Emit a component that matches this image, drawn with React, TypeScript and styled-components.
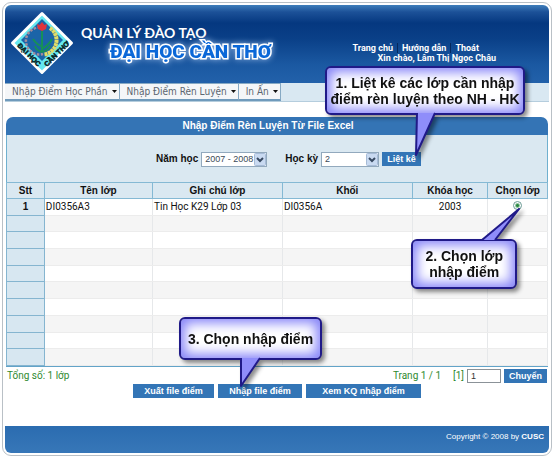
import React from "react";
import styled, { createGlobalStyle } from "styled-components";

const sans = '"Liberation Sans", Arial, sans-serif';
const compact = 'Roboto, "Liberation Sans", sans-serif';
const ui = '"DejaVu Sans Condensed", "DejaVu Sans", sans-serif';

const GlobalStyle = createGlobalStyle`
  *, *::before, *::after { box-sizing: border-box; }
  body { margin: 0; background: #fff; font-family: ${compact}; font-size: 10px; color: #111; }
`;

const Frame = styled.div`
  display: flex;
  flex-direction: column;
  margin: 2px 2px 0;
  padding: 2px;
  border: 1px solid #b9c0c6;
  border-radius: 9px;
  background: #fff;
`;

const Header = styled.header`
  display: flex;
  align-items: flex-start;
  justify-content: space-between;
  height: 78px;
  padding: 6px 53px 0 5px;
  border-radius: 6px 6px 0 0;
  background: linear-gradient(#3f7ebb 0, #1c5198 7px, #053880 18px, #0a4088 34px, #1b59a2 60px, #2261aa 100%);
  color: #fff;
`;

const Brand = styled.div`
  display: flex;
  align-items: flex-start;
  gap: 7px;
`;

const BrandText = styled.div`
  padding-top: 13px;
`;

const BrandLine = styled.div`
  font: 700 14px/18px Lato, sans-serif;
  white-space: nowrap;
`;

const BrandName = styled.h1`
  margin: 0;
  padding-left: 29px;
  font: 900 19px/20px Roboto, sans-serif;
  white-space: nowrap;
  color: #0b68d8;
  -webkit-text-stroke: 3px #fff;
  paint-order: stroke fill;
  filter: drop-shadow(0 0 3px #8fb4e4);
`;

const UserArea = styled.div`
  padding-top: 32px;
  font: 700 9px/10px ${compact};
  white-space: nowrap;
`;

const UserLinks = styled.nav`
  display: flex;
  a {
    color: #fff;
    text-decoration: none;
  }
  a + a {
    margin-left: 4px;
    padding-left: 4px;
    border-left: 1px solid #06285c;
  }
`;

const Greeting = styled.div`
  padding-left: 25px;
`;

const MenuBar = styled.nav`
  display: flex;
  height: 19px;
  background: #d9e8f2;
  border-bottom: 1px solid #b5cddd;
`;

const MenuItem = styled.button`
  display: flex;
  align-items: center;
  gap: 4px;
  padding: 0 2px 0 7px;
  border: 1px solid #86a9c4;
  border-left-width: 0;
  border-bottom: 2px solid #6f9abb;
  background: #f4f6f8;
  color: #5c6670;
  font: 10px/14px ${ui};
  white-space: nowrap;
`;

const Main = styled.main`
  padding: 15px 1px 0;
`;

const Panel = styled.section`
  border-bottom: 1px solid #62a3c8;
`;

const PanelTitle = styled.h2`
  margin: 0;
  height: 18px;
  border-radius: 7px 7px 0 0;
  background: #3474b5;
  color: #fff;
  font: 700 10px/18px ${sans};
  text-align: center;
  padding-right: 18px;
`;

const Filters = styled.form`
  display: flex;
  align-items: center;
  justify-content: center;
  height: 47px;
  padding: 1px 0 0 23px;
  border: solid #6fb0cf;
  border-width: 0 1px;
  background: #dae8f1;
`;

const Label = styled.label`
  font: 700 10px/14px ${sans};
  margin-right: 3px;
  white-space: nowrap;
`;

const SelectBox = styled.span<{ $width: number; $after: number }>`
  position: relative;
  display: inline-flex;
  width: ${(p) => p.$width}px;
  margin-right: ${(p) => p.$after}px;
  svg {
    position: absolute;
    top: 1px;
    right: 1px;
    pointer-events: none;
  }
`;

const Select = styled.select`
  appearance: none;
  width: 100%;
  height: 15px;
  padding: 0 0 0 3px;
  border: 1px solid #92a9bd;
  border-radius: 0;
  background: #fff;
  color: #3c4a58;
  font: 9px/13px ${sans};
`;

const Anchor = styled.span`
  position: relative;
  display: inline-flex;
`;

const Button = styled.button<{ $width: number }>`
  width: ${(p) => p.$width}px;
  height: 14px;
  padding: 0;
  border: 0;
  background: #3375b6;
  color: #fff;
  font: 700 9px/14px ${sans};
  white-space: nowrap;
`;

const Table = styled.table`
  width: 100%;
  height: 184px;
  table-layout: fixed;
  border-collapse: collapse;
  border: 1px solid #62a3c8;
  th, td { padding: 0 1px; height: 16px; line-height: 13px; }
  thead th {
    background: #dae8f1;
    border: 1px solid #85b9d4;
    font: 700 10px/13px ${sans};
  }
  tbody th {
    background: #d7e7f1;
    border: 1px solid #85b5d0;
    font: 700 10px/13px ${sans};
  }
  tbody td {
    border: 1px solid #e6e8ea;
    border-bottom-color: #ececec;
    white-space: nowrap;
  }
  tbody tr:nth-child(even) td { background: #f5f5f5; }
`;

const Col = styled.col<{ $share: number }>`
  width: ${(p) => p.$share}%;
`;

const Cell = styled.td<{ $center?: boolean }>`
  text-align: ${(p) => (p.$center ? "center" : "left")};
`;

const Radio = styled.input`
  appearance: none;
  width: 9px;
  height: 9px;
  margin: 0;
  border: 1px solid #6a9a94;
  border-radius: 50%;
  background: radial-gradient(#2c8a43 0 1px, #fff 3px);
`;

const Status = styled.div`
  display: flex;
  align-items: center;
  justify-content: space-between;
  height: 17px;
  padding: 0 1px;
  color: #2f8a2f;
`;

const Pager = styled.div`
  display: flex;
  align-items: center;
`;

const PageCount = styled.span`
  margin-right: 12px;
`;

const PageInput = styled.input`
  width: 34px;
  height: 14px;
  margin: 0 3px;
  padding: 0 3px;
  border: 1px solid #8b9298;
  background: #fff;
  color: #333;
  font: 9px/12px ${sans};
`;

const Actions = styled.div`
  display: flex;
  justify-content: center;
  gap: 4px;
  height: 42px;
`;

const Footer = styled.footer`
  height: 27px;
  padding: 5px 5px 0 0;
  border-radius: 0 0 6px 6px;
  background: linear-gradient(#2b6cb0, #3777b8);
  color: #fff;
  font: 8px/12px ${sans};
  text-align: right;
`;

const Bubble = styled.div<{ $x: number; $y: number; $w: number; $h: number }>`
  position: absolute;
  z-index: 5;
  left: ${(p) => p.$x}px;
  top: ${(p) => p.$y}px;
  width: ${(p) => p.$w}px;
  height: ${(p) => p.$h}px;
  display: flex;
  align-items: center;
  justify-content: center;
  border: 2px solid #201a88;
  border-radius: 6px;
  background: #fff;
  box-shadow: inset 0 0 12px 4px #8583f8;
  filter: drop-shadow(3px 3px 2px rgba(0, 0, 0, 0.45));
  color: #111;
  font: 700 14px/16px ${sans};
  text-align: center;
  white-space: pre;
  pointer-events: none;
`;

const Pointer = styled.svg<{ $x: number; $y: number }>`
  position: absolute;
  left: ${(p) => p.$x}px;
  top: ${(p) => p.$y}px;
  overflow: visible;
`;

function Logo() {
  return (
    <svg width="64" height="64" viewBox="0 0 64 64" role="img" aria-label="Đại Học Cần Thơ">
      <defs>
        <path id="leftEdge" d="M7 35 L30 58" />
        <path id="rightEdge" d="M37 56 L62 31" />
      </defs>
      <path d="M32 2.500 L61.500 32 L32 61.500 L2.500 32Z" fill="#66e8f0" stroke="#fff" strokeWidth="3" strokeLinejoin="round" />
      <path d="M32 8 L53 29 L32 50 L11 29Z" fill="#1b64a8" />
      <path d="M30 16.500 A13.500 13.500 0 1 0 33 43" fill="none" stroke="#a48c9c" strokeWidth="2.500" strokeDasharray="2.500 1.500" />
      <path d="M40 17 A14.500 14.500 0 0 1 34 43.500" fill="none" stroke="#e2dc66" strokeWidth="4" strokeDasharray="3 0.500" />
      <path d="M32 20 V41 M31 35 C28 34 25 31 23 28 M32 38 C37 35 40 32 42 28 M32 41 C28 40 26 38 25 35 M32 41 C36 40 39 38 40 35" fill="none" stroke="#169058" strokeWidth="2" />
      <path d="M27 13 L29.500 14 L32 11 L34.500 14 L37 13 L36 18 L32 20 L28 18Z" fill="#e0343c" />
      <g fontFamily="Liberation Sans, sans-serif" fontWeight="700" fontSize="7" fill="#06231f" stroke="#06231f" strokeWidth="0.500">
        <text><textPath href="#leftEdge">ĐẠI HỌC</textPath></text>
        <text><textPath href="#rightEdge">CẦN THƠ</textPath></text>
      </g>
    </svg>
  );
}

function DropArrow() {
  return (
    <svg width="12" height="13" viewBox="0 0 12 13" aria-hidden="true">
      <rect x="0.500" y="0.500" width="11" height="12" rx="1" fill="#c9daf1" stroke="#a6bbd6" />
      <path d="M3 5 L6 8 L9 5" fill="none" stroke="#374961" strokeWidth="2" />
    </svg>
  );
}

function MenuArrow() {
  return (
    <svg width="5" height="3" viewBox="0 0 5 3" aria-hidden="true">
      <path d="M0 0H5L2.500 3Z" fill="#111" />
    </svg>
  );
}

function Tail({ x, y, points }: { x: number; y: number; points: string }) {
  return (
    <Pointer $x={x} $y={y} width="40" height="45" aria-hidden="true">
      <polygon points={points} fill="#8f8dfa" />
      <polyline points={points} fill="none" stroke="#201a88" strokeWidth="2" strokeLinejoin="round" />
    </Pointer>
  );
}

const menus = ["Nhập Điểm Học Phần", "Nhập Điểm Rèn Luyện", "In Ấn"];
const columns = [
  { title: "Stt", share: 7 },
  { title: "Tên lớp", share: 20 },
  { title: "Ghi chú lớp", share: 24 },
  { title: "Khối", share: 24 },
  { title: "Khóa học", share: 14 },
  { title: "Chọn lớp", share: 11 },
];
const emptyRows = Array.from({ length: 9 }, (_, i) => i);

export default function App() {
  return (
    <>
      <GlobalStyle />
      <Frame>
        <Header>
          <Brand>
            <Logo />
            <BrandText>
              <BrandLine>QUẢN LÝ ĐÀO TẠO</BrandLine>
              <BrandName>ĐẠI HỌC CẦN THƠ</BrandName>
            </BrandText>
          </Brand>
          <UserArea>
            <UserLinks>
              <a href="#home">Trang chủ</a>
              <a href="#guide">Hướng dẫn</a>
              <a href="#logout">Thoát</a>
            </UserLinks>
            <Greeting>Xin chào, Lâm Thị Ngọc Châu</Greeting>
          </UserArea>
        </Header>
        <MenuBar>
          {menus.map((name) => (
            <MenuItem key={name} type="button">
              {name}
              <MenuArrow />
            </MenuItem>
          ))}
        </MenuBar>
        <Main>
          <Panel>
            <PanelTitle>Nhập Điểm Rèn Luyện Từ File Excel</PanelTitle>
            <Filters onSubmit={(e) => e.preventDefault()}>
              <Label htmlFor="year">Năm học</Label>
              <SelectBox $width={66} $after={18}>
                <Select id="year"><option>2007 - 2008</option></Select>
                <DropArrow />
              </SelectBox>
              <Label htmlFor="term">Học kỳ</Label>
              <SelectBox $width={58} $after={3}>
                <Select id="term"><option>2</option></Select>
                <DropArrow />
              </SelectBox>
              <Anchor>
                <Button type="submit" $width={39}>Liệt kê</Button>
                <Bubble $x={-57} $y={-86} $w={200} $h={49}>
                  {"1. Liệt kê các lớp cần nhập\nđiểm rèn luyện theo NH - HK"}
                  <Tail x={88} y={44} points="2,1 1,43 20,1" />
                </Bubble>
              </Anchor>
            </Filters>
            <Table>
              <colgroup>
                {columns.map((c) => <Col key={c.title} $share={c.share} />)}
              </colgroup>
              <thead>
                <tr>{columns.map((c) => <th key={c.title} scope="col">{c.title}</th>)}</tr>
              </thead>
              <tbody>
                <tr>
                  <th scope="row">1</th>
                  <Cell>DI0356A3</Cell>
                  <Cell>Tin Học K29 Lớp 03</Cell>
                  <Cell>DI0356A</Cell>
                  <Cell $center>2003</Cell>
                  <Cell $center>
                    <Anchor>
                      <Radio type="radio" name="class" aria-label="Chọn lớp DI0356A3" />
                      <Bubble $x={-102} $y={38} $w={106} $h={50}>
                        {"2. Chọn lớp\nnhập điểm"}
                        <Tail x={69} y={-32} points="0,31 37,0 13,31" />
                      </Bubble>
                    </Anchor>
                  </Cell>
                </tr>
                {emptyRows.map((i) => (
                  <tr key={i}>
                    <th />
                    <Cell /><Cell /><Cell /><Cell /><Cell />
                  </tr>
                ))}
              </tbody>
            </Table>
          </Panel>
          <Status>
            <span>Tổng số: 1 lớp</span>
            <Pager>
              <PageCount>Trang 1 / 1</PageCount>
              <span>[1]</span>
              <PageInput aria-label="Trang" defaultValue="1" />
              <Button type="button" $width={43}>Chuyển</Button>
            </Pager>
          </Status>
          <Actions>
            <Button type="button" $width={81}>Xuất file điểm</Button>
            <Anchor>
              <Button type="button" $width={84}>Nhập file điểm</Button>
              <Bubble $x={-39} $y={-67} $w={143} $h={43}>
                3. Chọn nhập điểm
                <Tail x={59} y={38} points="1,1 1,29 20,1" />
              </Bubble>
            </Anchor>
            <Button type="button" $width={115}>Xem KQ nhập điểm</Button>
          </Actions>
        </Main>
        <Footer>Copyright © 2008 by <b>CUSC</b></Footer>
      </Frame>
    </>
  );
}
